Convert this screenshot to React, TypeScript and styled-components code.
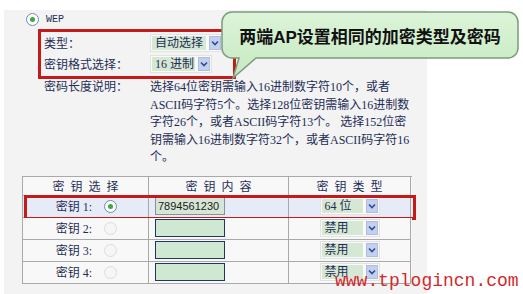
import styled, { createGlobalStyle } from "styled-components";

const GlobalStyle = createGlobalStyle`
  html, body {
    margin: 0;
    padding: 0;
    background: #fff;
  }
  body {
    font-family: "Liberation Serif", "Noto Sans CJK SC", serif;
    font-size: 12px;
    color: #1e2d55;
  }
`

const RED = "#c41a1a"

const keys = [
    { no: 1, value: "7894561230", type: "64 位", checked: true },
    { no: 2, value: "", type: "禁用", checked: false },
    { no: 3, value: "", type: "禁用", checked: false },
    { no: 4, value: "", type: "禁用", checked: false },
]

const descLines = [
    "选择64位密钥需输入16进制数字符10个，或者",
    "ASCII码字符5个。选择128位密钥需输入16进制数",
    "字符26个，或者ASCII码字符13个。 选择152位密",
    "钥需输入16进制数字符32个，或者ASCII码字符16",
    "个。",
]

function Chevron() {
    return (
        <svg width="8" height="6" viewBox="0 0 8 6">
            <polyline points="1,1.5 4,4.5 7,1.5" fill="none" stroke="#2f4a9a" strokeWidth="1.6" />
        </svg>
    )
}

function Select({ value, width }: { value: string, width: number }) {
    return (
        <SelectBox $w={width}>
            <SelectValue>{value}</SelectValue>
            <SelectArrow><Chevron /></SelectArrow>
        </SelectBox>
    )
}

export default function App() {
    return (
        <>
            <GlobalStyle />
            <Page>
                <Panel>
                    <WepRow>
                        <Radio $checked />
                        <WepText>WEP</WepText>
                    </WepRow>

                    <FormatBox>
                        <FieldRow>
                            <Label>类型：</Label>
                            <Select value="自动选择" width={73} />
                        </FieldRow>
                        <FieldRow>
                            <Label>密钥格式选择：</Label>
                            <Select value="16 进制" width={62} />
                        </FieldRow>
                    </FormatBox>

                    <DescRow>
                        <DescLabel>密码长度说明：</DescLabel>
                        <DescText>
                            {descLines.map((line, index) => (
                                <div key={index}>{line}</div>
                            ))}
                        </DescText>
                    </DescRow>

                    <KeyTable>
                        <TableRow $h={19}>
                            <HeadCell>密钥选择</HeadCell>
                            <HeadCell>密钥内容</HeadCell>
                            <HeadCell>密钥类型</HeadCell>
                        </TableRow>
                        {keys.map(key => (
                            <TableRow key={key.no} $h={22} $marked={key.checked}>
                                <SelectCell>
                                    <span>密钥 {key.no}:</span>
                                    <Radio $checked={key.checked} $disabled={!key.checked} />
                                </SelectCell>
                                <ContentCell>
                                    <KeyInput $filled={key.value !== ""}>{key.value}</KeyInput>
                                </ContentCell>
                                <TypeCell>
                                    <Select value={key.type} width={60} />
                                </TypeCell>
                            </TableRow>
                        ))}
                    </KeyTable>
                </Panel>

                <Bubble>
                    <svg width="300" height="72" viewBox="0 0 300 72">
                        <defs>
                            <linearGradient id="bubbleFill" x1="0" y1="0" x2="0" y2="1">
                                <stop offset="0" stopColor="#dcf4d8" />
                                <stop offset="1" stopColor="#c6e9c1" />
                            </linearGradient>
                        </defs>
                        <path
                            d="M12,2 H288 A10,10 0 0 1 298,12 V38 A10,10 0 0 1 288,48 H36 L13,68 L19,48 H12 A10,10 0 0 1 2,38 V12 A10,10 0 0 1 12,2 Z"
                            fill="url(#bubbleFill)"
                            stroke="#7c9c7c"
                            strokeWidth="1.5"
                        />
                    </svg>
                    <BubbleText>两端AP设置相同的加密类型及密码</BubbleText>
                </Bubble>

                <Watermark>www.tplogincn.com</Watermark>
            </Page>
        </>
    )
}

const Page = styled.div`
    position: relative;
    width: 523px;
    height: 294px;
    overflow: hidden;
    background: #fff;
`
const Panel = styled.div`
    margin: 10px 0 0 4px;
    width: 423px;
    height: 284px;
    background: #f3f3f3;
    display: flex;
    flex-direction: column;
`
const WepRow = styled.div`
    height: 19px;
    padding-left: 22px;
    display: flex;
    align-items: center;
    gap: 7px;
`
const WepText = styled.span`
    font-family: "Liberation Mono", monospace;
    font-size: 10px;
    color: #1e2d55;
`
const Radio = styled.span<{ $checked?: boolean, $disabled?: boolean }>`
    position: relative;
    display: inline-block;
    width: 11px;
    height: 11px;
    border-radius: 50%;
    border: 1px solid ${p => p.$disabled ? "#dcdcdc" : "#6f8cae"};
    background: ${p => p.$disabled ? "#f6f6f6" : "#fff"};
    flex-shrink: 0;

    &::after {
        content: "";
        display: ${p => p.$checked ? "block" : "none"};
        position: absolute;
        left: 3px;
        top: 3px;
        width: 5px;
        height: 5px;
        border-radius: 50%;
        background: #3da843;
    }
`
const FormatBox = styled.div`
    margin-left: 34px;
    width: 198px;
    height: 50px;
    box-sizing: border-box;
    border: 3px solid ${RED};
    padding: 0 0 1px 3px;
    display: flex;
    flex-direction: column;
    justify-content: center;
`
const FieldRow = styled.div`
    height: 22px;
    display: flex;
    align-items: center;
`
const Label = styled.div`
    width: 106px;
    flex-shrink: 0;
`
const SelectBox = styled.div<{ $w: number }>`
    display: flex;
    width: ${p => p.$w}px;
    height: 18px;
    box-sizing: border-box;
    padding: 1px;
    gap: 3px;
    background: #fafafa;
    border: 1px solid #e2e2e2;
`
const SelectValue = styled.div`
    flex: 1;
    background: #d5e8d3;
    padding-left: 3px;
    line-height: 14px;
    white-space: nowrap;
    overflow: hidden;
`
const SelectArrow = styled.div`
    width: 12px;
    box-sizing: border-box;
    background: #c4d1ee;
    border: 1px solid #b0bedd;
    display: flex;
    align-items: center;
    justify-content: center;
`
const DescRow = styled.div`
    display: flex;
    padding-left: 40px;
`
const DescLabel = styled.div`
    width: 106px;
    flex-shrink: 0;
    line-height: 17.5px;
`
const DescText = styled.div`
    line-height: 17.5px;
    white-space: nowrap;
`
const KeyTable = styled.div`
    margin: 9px 0 0 18px;
    width: 389px;
    border-top: 1px solid #a9a9a9;
    border-left: 1px solid #a9a9a9;
`
const TableRow = styled.div<{ $h: number, $marked?: boolean }>`
    position: relative;
    display: grid;
    grid-template-columns: 126px 140px 122px;
    height: ${p => p.$h}px;
    background: ${p => p.$marked ? "#e6ecf7" : "#f8f8f8"};

    & > div {
        box-sizing: border-box;
        border-right: 1px solid #a9a9a9;
        border-bottom: 1px solid #a9a9a9;
        display: flex;
        align-items: center;
    }

    &::after {
        content: "";
        display: ${p => p.$marked ? "block" : "none"};
        position: absolute;
        left: 1px;
        right: -4px;
        top: -1px;
        bottom: -2px;
        border: 3px solid ${RED};
        pointer-events: none;
    }
`
const HeadCell = styled.div`
    justify-content: center;
    letter-spacing: 6px;
    padding-left: 6px;
`
const SelectCell = styled.div`
    justify-content: center;
    gap: 12px;
    padding-left: 2px;
`
const ContentCell = styled.div`
    padding-left: 6px;
`
const TypeCell = styled.div`
    justify-content: center;
`
const KeyInput = styled.div<{ $filled: boolean }>`
    width: 70px;
    height: 18px;
    box-sizing: border-box;
    border: 1px solid ${p => p.$filled ? "#8a8f98" : "#22375f"};
    background: ${p => p.$filled ? "#d6e6d6" : "#cfe8d2"};
    font-family: "Liberation Sans", sans-serif;
    font-size: 11px;
    line-height: 16px;
    padding-left: 2px;
    color: #1a1a1a;
`
const Bubble = styled.div`
    position: absolute;
    left: 220px;
    top: 10px;
    width: 300px;
    height: 72px;
`
const BubbleText = styled.div`
    position: absolute;
    left: 2px;
    top: 2px;
    width: 296px;
    height: 46px;
    display: flex;
    align-items: center;
    justify-content: center;
    font-family: "Liberation Sans", "Noto Sans CJK SC", sans-serif;
    font-weight: bold;
    font-size: 17px;
    color: #111;
`
const Watermark = styled.div`
    position: absolute;
    left: 335px;
    top: 271px;
    font-family: "Liberation Mono", monospace;
    font-size: 18px;
    line-height: 20px;
    color: #d12a2a;
    white-space: nowrap;
`
